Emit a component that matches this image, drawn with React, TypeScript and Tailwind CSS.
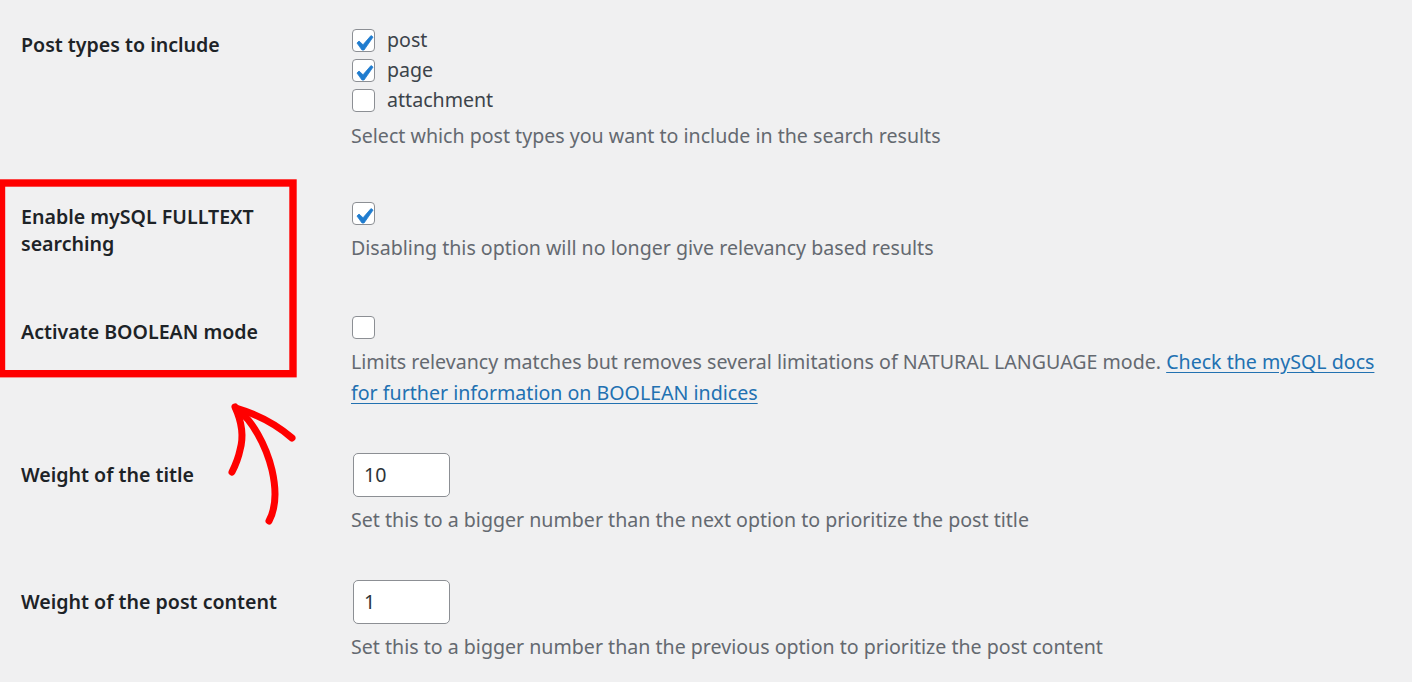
import React from "react";

const font = { fontFamily: '"Noto Sans", "Open Sans", sans-serif' };

function Check({ checked, label }: { checked: boolean; label?: string }) {
  return (
    <div className="flex h-[30px] items-center">
      <span className="relative ml-[1px] inline-block h-[23px] w-[23px] shrink-0 rounded-[4px] border border-[#8c8f94] bg-white">
        {checked && (
          <svg
            viewBox="0 0 20 20"
            className="absolute left-[-5px] top-[-2px] h-[31px] w-[31px]"
          >
            <path
              d="M14.83 4.89l1.34.94-5.81 8.38H9.02L5.78 9.67l1.34-1.25 2.57 2.4z"
              fill="#1f7ccf"
              stroke="#1f7ccf"
              strokeWidth="0.5"
              strokeLinejoin="round"
            />
          </svg>
        )}
      </span>
      {label && <span className="ml-[12px] text-[#3c434a]">{label}</span>}
    </div>
  );
}

function Label({ children, mt }: { children: React.ReactNode; mt: string }) {
  return (
    <div className={`w-[351px] shrink-0 pl-[21px] pr-4 ${mt}`}>
      <div className="text-[19.6px] font-semibold leading-[27px] text-[#1d2327]">{children}</div>
    </div>
  );
}

export default function App() {
  return (
    <div
      className="relative h-[682px] w-[1412px] overflow-hidden bg-[#f0f0f1] pt-[25px] text-[19.6px]"
      style={font}
    >
      {/* Row 1 */}
      <div className="flex">
        <Label mt="mt-[6px]">Post types to include</Label>
        <div className="flex flex-col">
          <Check checked label="post" />
          <Check checked label="page" />
          <Check checked={false} label="attachment" />
          <p className="mt-[6px] leading-[30px] text-[#646970]">
            Select which post types you want to include in the search results
          </p>
        </div>
      </div>

      {/* Row 2 */}
      <div className="mt-[47px] flex">
        <Label mt="mt-[5px]">
          Enable mySQL FULLTEXT
          <br />
          searching
        </Label>
        <div className="flex flex-col">
          <Check checked />
          <p className="mt-[5px] leading-[30px] text-[#646970]">
            Disabling this option will no longer give relevancy based results
          </p>
        </div>
      </div>

      {/* Row 3 */}
      <div className="mt-[49px] flex">
        <Label mt="mt-[6px]">Activate BOOLEAN mode</Label>
        <div className="flex w-[1050px] flex-col">
          <Check checked={false} />
          <p className="mt-[4px] leading-[31px] text-[#646970]">
            Limits relevancy matches but removes several limitations of NATURAL LANGUAGE mode.{" "}
            <a href="#" className="text-[#2271b1] underline underline-offset-[3px]">
              Check the mySQL docs for further information on BOOLEAN indices
            </a>
          </p>
        </div>
      </div>

      {/* Row 4 */}
      <div className="mt-[45px] flex">
        <Label mt="mt-[8px]">Weight of the title</Label>
        <div className="flex flex-col">
          <div className="ml-[2px] flex h-[44px] w-[97px] items-center rounded-[5px] border border-[#8c8f94] bg-white px-[10px] text-[#2c3338]">
            10
          </div>
          <p className="mt-[8px] leading-[30px] text-[#646970]">
            Set this to a bigger number than the next option to prioritize the post title
          </p>
        </div>
      </div>

      {/* Row 5 */}
      <div className="mt-[45px] flex">
        <Label mt="mt-[8px]">Weight of the post content</Label>
        <div className="flex flex-col">
          <div className="ml-[2px] flex h-[44px] w-[97px] items-center rounded-[5px] border border-[#8c8f94] bg-white px-[10px] text-[#2c3338]">
            1
          </div>
          <p className="mt-[8px] leading-[30px] text-[#646970]">
            Set this to a bigger number than the previous option to prioritize the post content
          </p>
        </div>
      </div>

      {/* Annotation overlay */}
      <svg
        className="pointer-events-none absolute left-0 top-0"
        width="1412"
        height="682"
        viewBox="0 0 1412 682"
      >
        <rect x="1.5" y="183" width="291.5" height="190.7" fill="none" stroke="#ff0000" strokeWidth="7.4" />
        <g fill="none" stroke="#ff0000" strokeWidth="7" strokeLinecap="round" strokeLinejoin="round">
          <path d="M237 409 C252 420 266 445 272 470 C277 492 276 508 269 521" />
          <path d="M235 407 C241 420 244 436 240 450 C238 460 235 466 232 472" />
          <path d="M236 408 C256 414 276 424 292 438" />
        </g>
      </svg>
    </div>
  );
}
